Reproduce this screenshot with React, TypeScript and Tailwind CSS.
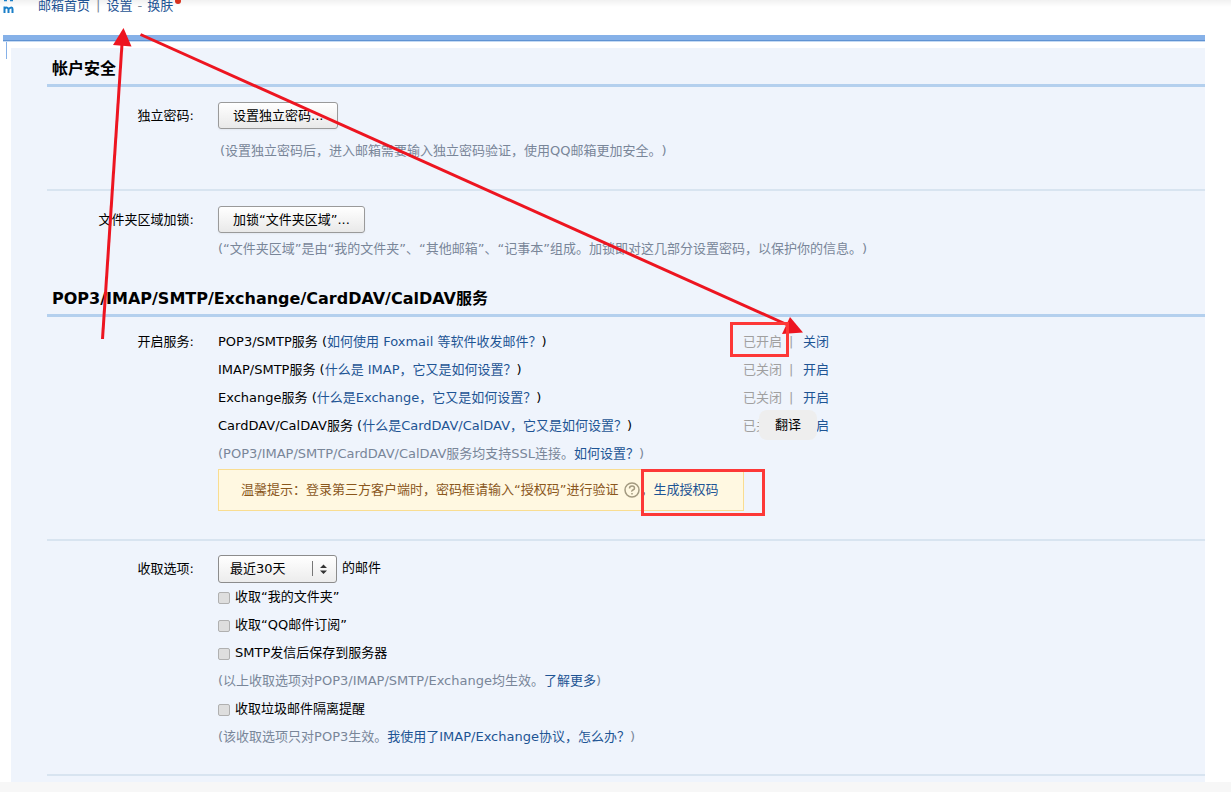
import type { ReactNode } from 'react';

const services = [
  { name: 'POP3/SMTP服务', help: '如何使用 Foxmail 等软件收发邮件？', status: '已开启', action: '关闭' },
  { name: 'IMAP/SMTP服务', help: '什么是 IMAP，它又是如何设置？', status: '已关闭', action: '开启' },
  { name: 'Exchange服务', help: '什么是Exchange，它又是如何设置？', status: '已关闭', action: '开启' },
  { name: 'CardDAV/CalDAV服务', help: '什么是CardDAV/CalDAV，它又是如何设置？', status: '已关闭', action: '开启' },
];

function Link({ children }: { children: ReactNode }) {
  return (
    <a href="#" className="text-[#1e5494] hover:underline">
      {children}
    </a>
  );
}

function Heading({ children }: { children: ReactNode }) {
  return (
    <h2 className="h-[39px] border-b-3 border-[#b4d0ee] pl-[5px] pt-[3px] text-base/[35px] font-bold">
      {children}
    </h2>
  );
}

function Row({ label, children }: { label: ReactNode; children: ReactNode }) {
  return (
    <div className="flex gap-6">
      <div className="w-[147px] shrink-0 text-right leading-7">{label}</div>
      <div className="min-w-0 flex-1">{children}</div>
    </div>
  );
}

function PushButton({ children }: { children: ReactNode }) {
  return (
    <button
      type="button"
      className="block h-[27px] rounded-[3px] border border-[#9a9a9a] bg-linear-to-b from-white to-[#e9e9e9] px-[14px] shadow-xs"
    >
      {children}
    </button>
  );
}

function CheckLine({ children }: { children: ReactNode }) {
  return (
    <label className="flex h-7 items-center gap-[5px]">
      <input
        type="checkbox"
        className="mt-0.5 size-3 appearance-none rounded-[2px] border border-[#b0b0b0] bg-[#dedede] checked:bg-[#1e5494]"
      />
      <span>{children}</span>
    </label>
  );
}

// Marks drawn over the page: two arrows, two frames and the translate bubble
function Annotations() {
  return (
    <>
      <button
        type="button"
        className="absolute left-[759px] top-[410px] h-[30px] w-[58px] rounded-lg bg-[#eeeeee]"
      >
        翻译
      </button>
      <svg
        className="pointer-events-none absolute left-0 top-0"
        width="810"
        height="345"
        viewBox="0 0 810 345"
        fill="#ed1520"
        stroke="#ed1520"
      >
        <path d="M102.500 339L122 44" strokeWidth="3" />
        <path d="M123.500 28L131.500 46.500L113 45Z" stroke="none" />
        <path d="M140.500 34.500L790 326" strokeWidth="3" />
        <path d="M803 332.500L790 317L782 334Z" stroke="none" />
      </svg>
      <div className="pointer-events-none absolute left-[730px] top-[322px] h-[35px] w-[59px] border-3 border-[#fd3837]" />
      <div className="pointer-events-none absolute left-[641px] top-[469px] h-[47px] w-[124px] border-3 border-[#fd3837]" />
    </>
  );
}

export default function App() {
  return (
    <div className="relative bg-white font-['DejaVu_Sans','Noto_Sans_CJK_SC',sans-serif] text-[13px]/[20px] text-black [text-spacing-trim:space-all]">
      <header className="relative flex h-[35px] overflow-hidden bg-linear-to-b from-[#f1f1f1] to-white to-20% pl-[3px]">
        <svg width="11" height="14" viewBox="0 0 11 14" fill="none" stroke="#1a7fc8" className="shrink-0">
          <path d="M1 0.500H4M7 0.500H10" strokeWidth="1.500" />
          <path d="M1.500 13V6.500M1.500 9Q3.500 6 5.500 9V13M5.500 9Q9.500 6 9.500 9V13" strokeWidth="2" />
        </svg>
        <nav className="-mt-1 ml-6 flex h-5 text-[#798699]">
          <Link>邮箱首页</Link>
          <span className="mx-1.5">|</span>
          <Link>设置</Link>
          <span className="mx-[5px]">-</span>
          <Link>换肤</Link>
        </nav>
        <span className="-mt-0.5 ml-0.5 size-1.5 rounded-full bg-[#d8321e]" />
      </header>

      <main className="mr-[26px]">
        <div className="ml-[3px] h-[7px] border-b border-[#c5daf3] bg-[#86b1e8]">
          <div className="h-1.5 border-b border-[#5f92d2]" />
        </div>
        <div className="flex">
          <div className="w-[11px] shrink-0 pl-1.5">
            <div className="h-[17px] w-px bg-[#86b1e8]" />
          </div>
          <div className="mt-1.5 min-w-0 flex-1 bg-[#eff4fc] pb-1.5 pl-9">
            <Heading>帐户安全</Heading>
            <section className="h-[104px] border-b-2 border-[#d8e4f0] pt-[15px]">
              <Row label="独立密码:">
                <PushButton>设置独立密码...</PushButton>
                <p className="mt-3 pl-0.5 text-[#798699]">
                  (设置独立密码后，进入邮箱需要输入独立密码验证，使用QQ邮箱更加安全。)
                </p>
              </Row>
            </section>
            <section className="h-[87px] pt-[15px]">
              <Row label="文件夹区域加锁:">
                <PushButton>加锁“文件夹区域”...</PushButton>
                <p className="mt-1.5 text-[#798699]">
                  (“文件夹区域”是由“我的文件夹”、“其他邮箱”、“记事本”组成。加锁即对这几部分设置密码，以保护你的信息。)
                </p>
              </Row>
            </section>

            <Heading>POP3/IMAP/SMTP/Exchange/CardDAV/CalDAV服务</Heading>
            <section className="border-b-2 border-[#d8e4f0] pb-7 pt-[11px]">
              <Row label="开启服务:">
                <ul>
                  {services.map((s) => (
                    <li key={s.name} className="flex leading-7">
                      <div className="w-[525px]">
                        {s.name} (<Link>{s.help}</Link>)
                      </div>
                      <div className="flex text-[#a0a0a0]">
                        <span className="w-[46px]">{s.status}</span>
                        <span className="w-[14px]">|</span>
                        <Link>{s.action}</Link>
                      </div>
                    </li>
                  ))}
                </ul>
                <p className="leading-7 text-[#798699]">
                  (POP3/IMAP/SMTP/CardDAV/CalDAV服务均支持SSL连接。<Link>如何设置？</Link>)
                </p>
                <div className="mt-px flex h-[42px] w-[526px] items-center whitespace-nowrap border border-[#f9dd91] bg-[#fff8e1] pl-[22px] text-[#8a571c]">
                  <span>温馨提示：登录第三方客户端时，密码框请输入“授权码”进行验证</span>
                  <svg
                    className="ml-1.5"
                    width="16"
                    height="16"
                    viewBox="0 0 16 16"
                    fill="none"
                    stroke="#a39a80"
                    strokeWidth="1.500"
                  >
                    <circle cx="8" cy="8" r="7" />
                    <path d="M5.500 6.500Q5.500 4 8 4T10.500 6.200Q10.500 7.300 9 8T8 9.700M8 11V12.500" />
                  </svg>
                  <span>，</span>
                  <Link>生成授权码</Link>
                </div>
              </Row>
            </section>

            <section className="border-b-2 border-[#d8e4f0] pb-[23px] pt-[14px]">
              <Row label={<label htmlFor="range">收取选项:</label>}>
                <div className="flex h-7 gap-[5px]">
                  <div className="relative">
                    <select
                      id="range"
                      className="h-7 w-[119px] appearance-none rounded-[3px] border border-[#8c8c8c] bg-linear-to-b from-white to-[#ececec] pl-[11px]"
                    >
                      <option>最近30天</option>
                      <option>全部</option>
                    </select>
                    <svg
                      className="pointer-events-none absolute right-[9px] top-1.5"
                      width="18"
                      height="16"
                      viewBox="0 0 18 16"
                      fill="#333"
                    >
                      <path d="M2 0H3V15H2Z" fill="#777" />
                      <path d="M10 7L13.500 3.500L17 7ZM10 9.500H17L13.500 13Z" />
                    </svg>
                  </div>
                  <span className="leading-[26px]">的邮件</span>
                </div>
                <CheckLine>收取“我的文件夹”</CheckLine>
                <CheckLine>收取“QQ邮件订阅”</CheckLine>
                <CheckLine>SMTP发信后保存到服务器</CheckLine>
                <p className="leading-7 text-[#798699]">
                  (以上收取选项对POP3/IMAP/SMTP/Exchange均生效。<Link>了解更多</Link>)
                </p>
                <CheckLine>收取垃圾邮件隔离提醒</CheckLine>
                <p className="leading-7 text-[#798699]">
                  (该收取选项只对POP3生效。<Link>我使用了IMAP/Exchange协议，怎么办？</Link>)
                </p>
              </Row>
            </section>
          </div>
        </div>
      </main>
      <footer className="h-2.5 bg-[#f7f7f7]" />
      <Annotations />
    </div>
  );
}
